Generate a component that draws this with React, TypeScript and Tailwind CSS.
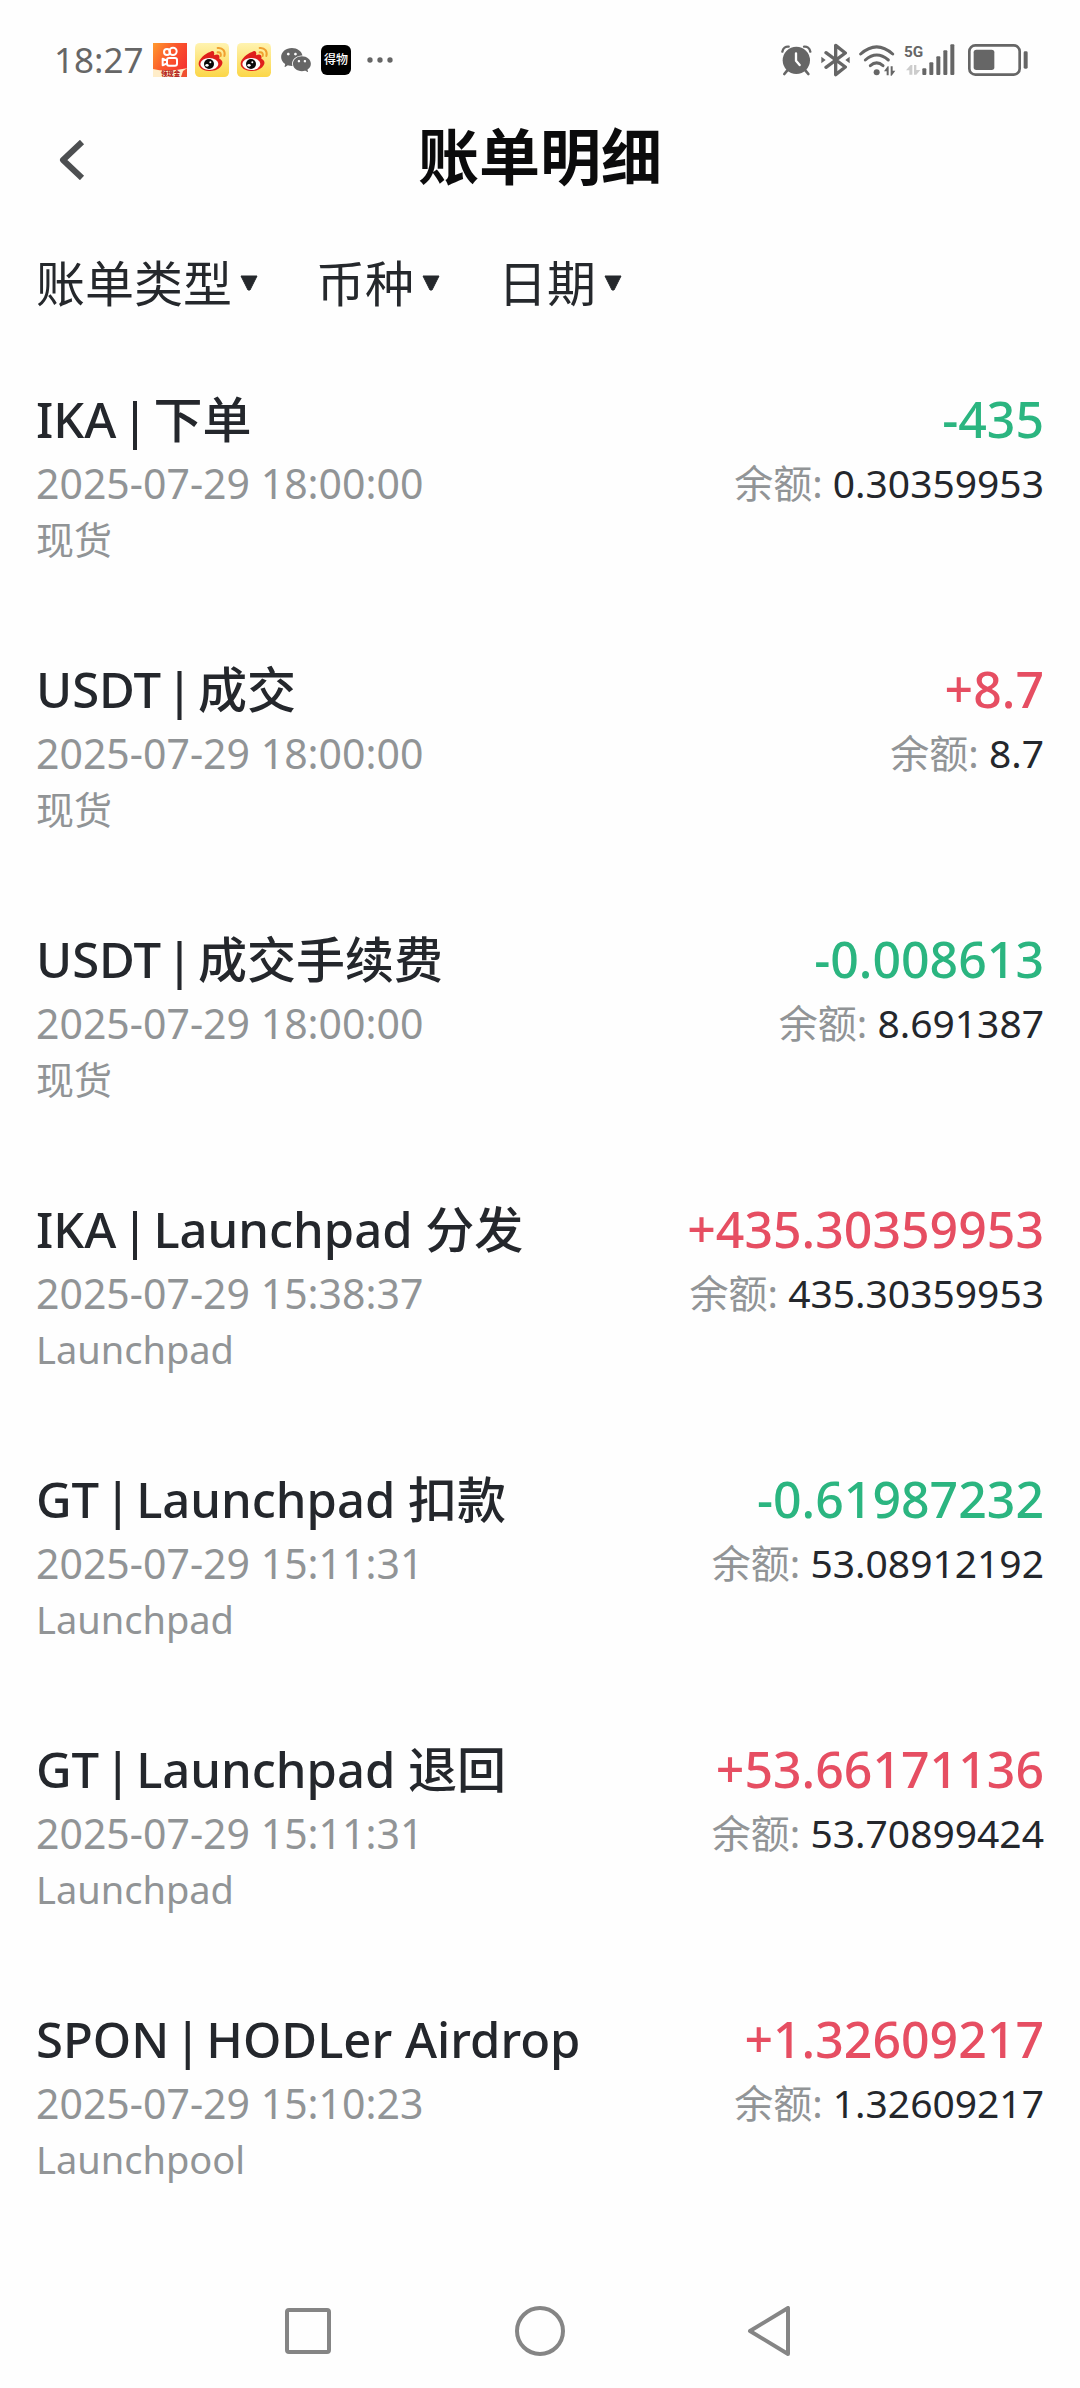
import React from "react";
import { AiFillWechat } from "react-icons/ai";

type Entry = {
  coin: string;
  kind: string;
  time: string;
  account: string;
  amount: string;
  balance: string;
};

const entries: Entry[] = [
  { coin: "IKA", kind: "下单", time: "2025-07-29 18:00:00", account: "现货", amount: "-435", balance: "0.30359953" },
  { coin: "USDT", kind: "成交", time: "2025-07-29 18:00:00", account: "现货", amount: "+8.7", balance: "8.7" },
  { coin: "USDT", kind: "成交手续费", time: "2025-07-29 18:00:00", account: "现货", amount: "-0.008613", balance: "8.691387" },
  { coin: "IKA", kind: "Launchpad 分发", time: "2025-07-29 15:38:37", account: "Launchpad", amount: "+435.30359953", balance: "435.30359953" },
  { coin: "GT", kind: "Launchpad 扣款", time: "2025-07-29 15:11:31", account: "Launchpad", amount: "-0.61987232", balance: "53.08912192" },
  { coin: "GT", kind: "Launchpad 退回", time: "2025-07-29 15:11:31", account: "Launchpad", amount: "+53.66171136", balance: "53.70899424" },
  { coin: "SPON", kind: "HODLer Airdrop", time: "2025-07-29 15:10:23", account: "Launchpool", amount: "+1.32609217", balance: "1.32609217" },
];

function KuaishouIcon() {
  return (
    <svg viewBox="0 0 102 102" className="size-[34px]" aria-hidden="true">
      <defs>
        <linearGradient id="ks" x1="0" y1="0" x2="1" y2="0.6">
          <stop offset="0" stopColor="#ff9a2e" />
          <stop offset="0.5" stopColor="#fb5a2c" />
          <stop offset="1" stopColor="#f5352f" />
        </linearGradient>
      </defs>
      <rect width="102" height="102" fill="url(#ks)" />
      <g fill="none" stroke="#fff" strokeWidth="6">
        <circle cx="42" cy="27" r="9" />
        <circle cx="60" cy="25" r="11" />
        <rect x="42" y="45" width="30" height="23" rx="6" />
        <path d="M42 53 L29 47 V67 L42 61" strokeLinejoin="round" />
      </g>
      <path d="M0 78 Q40 88 102 76 V102 H0Z" fill="#ffedc9" />
      <path d="M84 102 L90 84 L102 76 V102Z" fill="#f0502f" />
      <text x="24" y="98" fontSize="19" fontWeight="900" fill="#b3231b" fontFamily="Noto Sans CJK SC, sans-serif">领现金</text>
    </svg>
  );
}

function WeiboIcon({ id }: { id: string }) {
  return (
    <svg viewBox="0 0 102 102" className="size-[34px]" aria-hidden="true">
      <defs>
        <linearGradient id={id} x1="0" y1="0" x2="0" y2="1">
          <stop offset="0" stopColor="#fff3b0" />
          <stop offset="1" stopColor="#fbd648" />
        </linearGradient>
      </defs>
      <rect width="102" height="102" rx="14" fill={`url(#${id})`} />
      <path
        d="M45 27 C55 20 60 27 57 37 C68 32 76 35 73 47 C82 51 85 58 80 67 C73 79 58 85 42 84 C22 83 10 73 11 61 C12 49 29 32 45 27Z"
        fill="#df1f1c"
      />
      <ellipse cx="43" cy="63" rx="27" ry="18" fill="#fff" />
      <circle cx="42" cy="63" r="15" fill="#0a0a0a" />
      <ellipse cx="36" cy="67" rx="5" ry="4" fill="#fff" />
      <circle cx="46" cy="58" r="3" fill="#fff" />
      <g fill="none" stroke="#f0a030" strokeWidth="6" strokeLinecap="round">
        <path d="M68 15 C84 13 92 26 88 39" />
        <path d="M68 28 C76 27 79 32 77 39" />
      </g>
    </svg>
  );
}

function DewuIcon() {
  return (
    <svg viewBox="0 0 90 90" className="size-[30px]" aria-hidden="true">
      <rect width="90" height="90" rx="18" fill="#000" />
      <text x="45" y="58" textAnchor="middle" fontSize="36" fontWeight="500" fill="#fff" fontFamily="Noto Sans CJK SC, sans-serif">得物</text>
    </svg>
  );
}

function DotsIcon() {
  return (
    <svg viewBox="0 0 78 18" className="h-[6px] w-[26px]" fill="#666" aria-hidden="true">
      <circle cx="9" cy="9" r="8" />
      <circle cx="39" cy="9" r="8" />
      <circle cx="69" cy="9" r="8" />
    </svg>
  );
}

function AlarmIcon() {
  return (
    <svg viewBox="0 0 93 93" className="size-[31px]" aria-hidden="true">
      <circle cx="46" cy="46" r="41" fill="#666" />
      <g fill="none" stroke="#666" strokeLinecap="round">
        <path d="M4 20 C6 10 14 4 23 5" strokeWidth="7" />
        <path d="M88 20 C86 10 78 4 69 5" strokeWidth="7" />
        <path d="M19 76 L10 87 M73 76 L82 87" strokeWidth="8" />
      </g>
      <path d="M45 25 V47 L56 60" fill="none" stroke="#fff" strokeWidth="7" strokeLinecap="round" strokeLinejoin="round" />
    </svg>
  );
}

function BluetoothIcon() {
  return (
    <svg viewBox="0 0 87 102" className="h-[34px] w-[29px]" aria-hidden="true">
      <path d="M15 29 L73 72 L44 95 V7 L73 30 L15 73" fill="none" stroke="#666" strokeWidth="10" strokeLinejoin="round" strokeLinecap="round" />
      <path d="M1 41 L14 51 L1 61Z M86 41 L73 51 L86 61Z" fill="#666" />
    </svg>
  );
}

function WifiIcon() {
  return (
    <svg viewBox="0 0 111 93" className="h-[31px] w-[37px]" aria-hidden="true">
      <g fill="none" stroke="#666" strokeWidth="9" strokeLinecap="round">
        <path d="M5 27 Q53 -16 101 27" />
        <path d="M19 45 Q53 15 88 45" />
        <path d="M34 62 Q53 45 72 62" />
      </g>
      <circle cx="53" cy="82" r="9" fill="#666" />
      <path d="M75 79 L86 64 H89 V91 H83 V79Z M109 77 L98 92 H95 V64 H101 V77Z" fill="#666" />
    </svg>
  );
}

function SignalIcon() {
  return (
    <svg viewBox="0 0 150 96" className="h-[32px] w-[50px] overflow-visible" aria-hidden="true">
      <text x="-3" y="38" fontSize="46" fontWeight="700" fill="#666" fontFamily="Roboto, sans-serif">5G</text>
      <path d="M3 79 L17 63 H22 V92 H13 V79Z M46 78 L34 92 H27 V63 H34 V78Z" fill="#ccc" />
      <g fill="#666">
        <rect x="52" y="73" width="12" height="20" rx="3" />
        <rect x="73" y="55" width="12" height="38" rx="3" />
        <rect x="94" y="37" width="12" height="56" rx="3" />
        <rect x="115" y="19" width="12" height="74" rx="3" />
        <rect x="136" y="1" width="12" height="92" rx="3" />
      </g>
    </svg>
  );
}

function BatteryIcon() {
  return (
    <svg viewBox="0 0 180 96" className="h-[32px] w-[60px]" aria-hidden="true">
      <rect x="4" y="4" width="151" height="88" rx="18" fill="none" stroke="#666" strokeWidth="8" />
      <rect x="17" y="17" width="62" height="61" rx="8" fill="#666" />
      <rect x="167" y="22" width="12" height="52" rx="4" fill="#666" />
    </svg>
  );
}

function Filter({ label }: { label: string }) {
  return (
    <button type="button" aria-haspopup="listbox" className="flex items-center gap-2 text-[49px] leading-[68px] text-[#25282c]">
      {label}
      <svg viewBox="0 0 18 16" className="h-4 w-[18px]" aria-hidden="true">
        <path d="M1 1 H17 L10 15 H8Z" fill="#25282c" stroke="#25282c" strokeLinejoin="round" />
      </svg>
    </button>
  );
}

function Row({ entry }: { entry: Entry }) {
  const tone = entry.amount.startsWith("-") ? "text-[#2bb580]" : "text-[#e64e62]";
  return (
    <li className="flex items-start justify-between pb-[88px]">
      <div>
        <h2 className="flex gap-[5px] text-[49px] leading-[70px] font-medium text-[#24272c]">
          <span>{entry.coin}</span>
          <span>|</span>
          <span>{entry.kind}</span>
        </h2>
        <p className="text-[41px] leading-[58px] text-[#919496]">{entry.time}</p>
        <p className="text-[38px] leading-[54px] text-[#919496]">{entry.account}</p>
      </div>
      <div className="text-right">
        <p className={`text-[50px] leading-[70px] font-medium ${tone}`}>{entry.amount}</p>
        <p className="text-[39px] leading-[58px] text-[#919496]">
          余额: <span className="text-[#24272c]">{entry.balance}</span>
        </p>
      </div>
    </li>
  );
}

export default function App() {
  return (
    <div className="flex min-h-screen flex-col bg-[#fefefe] font-['Noto_Sans','Noto_Sans_CJK_SC',sans-serif]">
      <div className="flex h-[120px] items-center justify-between pr-[52px] pl-[54px]">
        <div className="flex items-center gap-2">
          <span className="mr-[2px] text-[35px] text-[#666]">18:27</span>
          <KuaishouIcon />
          <WeiboIcon id="wb1" />
          <WeiboIcon id="wb2" />
          <AiFillWechat className="size-[34px] text-[#666]" aria-hidden="true" />
          <DewuIcon />
          <span className="ml-2 flex">
            <DotsIcon />
          </span>
        </div>
        <div className="flex items-center gap-[9px]">
          <AlarmIcon />
          <BluetoothIcon />
          <WifiIcon />
          <SignalIcon />
          <span className="ml-1 flex">
            <BatteryIcon />
          </span>
        </div>
      </div>

      <header className="grid h-20 grid-cols-[1fr_auto_1fr] items-center px-9">
        <button type="button" aria-label="返回" className="flex size-[72px] items-center justify-center">
          <svg viewBox="0 0 28 40" className="h-10 w-7" fill="none" stroke="#4d4f51" strokeWidth="6" strokeLinejoin="round" aria-hidden="true">
            <path d="M24 2 L5 20 L24 38" />
          </svg>
        </button>
        <h1 className="self-start text-[61px] leading-[74px] font-bold text-[#0b0b0c]">账单明细</h1>
      </header>

      <nav className="mt-[49px] flex gap-[58px] px-9" aria-label="筛选">
        <Filter label="账单类型" />
        <Filter label="币种" />
        <Filter label="日期" />
      </nav>

      <ul className="mt-[67px] flex-1 px-9">
        {entries.map((entry) => (
          <Row key={entry.coin + entry.kind} entry={entry} />
        ))}
      </ul>

      <footer className="flex h-[114px] items-center justify-center gap-[182px]">
        <button type="button" aria-label="最近任务">
          <svg viewBox="0 0 50 50" className="size-[50px]" fill="none" stroke="#858585" strokeWidth="4" aria-hidden="true">
            <rect x="4" y="4" width="42" height="42" rx="2" />
          </svg>
        </button>
        <button type="button" aria-label="主屏幕">
          <svg viewBox="0 0 50 50" className="size-[50px]" fill="none" stroke="#858585" strokeWidth="4" aria-hidden="true">
            <circle cx="25" cy="25" r="23" />
          </svg>
        </button>
        <button type="button" aria-label="返回上一页">
          <svg viewBox="0 0 50 50" className="size-[50px]" fill="none" stroke="#858585" strokeWidth="4" strokeLinejoin="round" aria-hidden="true">
            <path d="M41 2 V48 L3 25Z" />
          </svg>
        </button>
      </footer>
    </div>
  );
}
